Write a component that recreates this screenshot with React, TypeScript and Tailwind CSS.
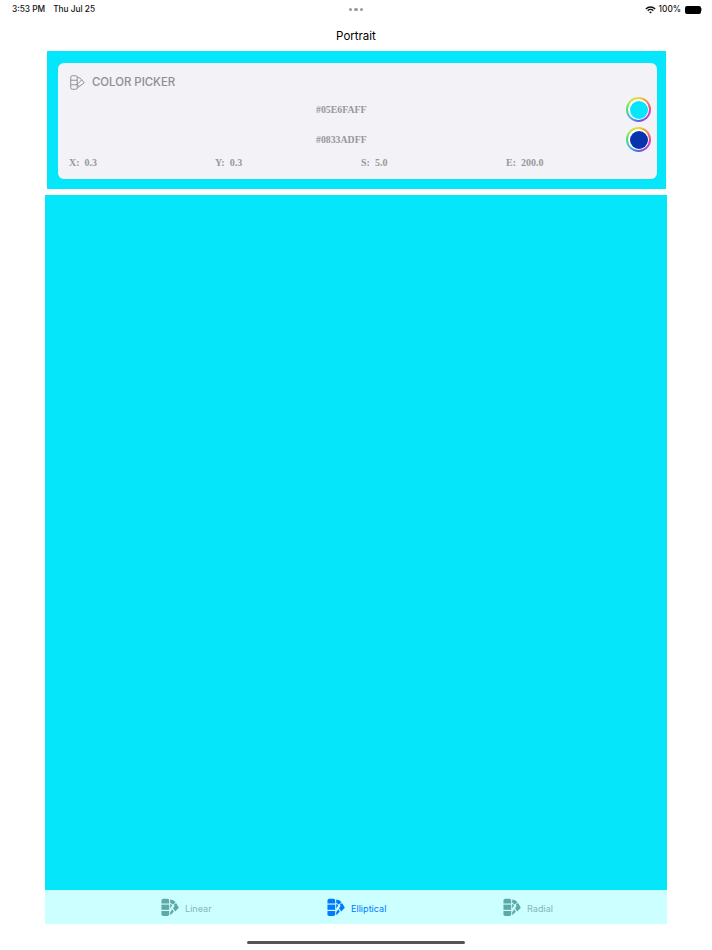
import { useState } from "react";

function Palette({ filled, className }: { filled?: boolean; className?: string }) {
  if (filled) {
    return (
      <svg viewBox="0 0 20 20" className={className} fill="currentColor">
        <path d="M0.5 2.4a2 2 0 0 1 2-2h4.6a2 2 0 0 1 2 2v3.2H0.5z" />
        <path d="M0.5 6.8h8.6v5.8H0.5z" />
        <path d="M0.5 13.8h8.6v3.6a2 2 0 0 1-2 2H2.5a2 2 0 0 1-2-2z" />
        <path d="M10.2 1.2q3.8.4 6 3l-3 2.6-3-2z" />
        <path d="M10.2 5.8l2.4 1.8-2.4 3.6z" />
        <path d="M14.4 6.2l2.6-1 2.8 5.2-4 4-2.4-3.6 1.6-2.4z" />
        <path d="M12.6 12l1.6 2.6-3.6 3.6-.4-.3v-2.6z" />
      </svg>
    );
  }
  return (
    <svg viewBox="0 0 20 20" className={className} fill="none" stroke="currentColor" strokeWidth="1.3" strokeLinejoin="round">
      <rect x="1" y="1" width="8.6" height="18" rx="2" />
      <path d="M1 7h8.6M1 13h8.6" />
      <path d="M9.6 3q4 .2 6 3.4l3.4 4-9.4 7" />
      <path d="M9.6 12.6l6-6.2M12.4 15.4l-2.8-2.8" />
    </svg>
  );
}

function Swatch({ color }: { color: string }) {
  return (
    <div className="w-[25px] h-[25px] rounded-full p-[2px] bg-[conic-gradient(#f0d83a,#f0903c,#e8489a,#a63fe4,#5a60e8,#3fb6f0,#4fdc7a,#b8e64a,#f0d83a)]">
      <div className="w-full h-full rounded-full bg-white p-[1.5px]">
        <div className={`w-full h-full rounded-full ${color}`} />
      </div>
    </div>
  );
}

function ColorRow({ hex, color }: { hex: string; color: string }) {
  return (
    <div className="flex items-center h-[25px]">
      <div className="flex-1 pl-[247px] pt-[2px] text-[9.8px] font-bold font-['Liberation_Serif',serif] text-[#98989d]">{hex}</div>
      <Swatch color={color} />
    </div>
  );
}

function Param({ name, value }: { name: string; value: string }) {
  return (
    <div className="flex gap-[5px]">
      <span>{name}</span>
      <span>{value}</span>
    </div>
  );
}

export default function App() {
  const [tab, setTab] = useState("Elliptical");
  const tabs = [
    { name: "Linear", width: "w-[185px]", pad: "pl-[116px]" },
    { name: "Elliptical", width: "w-[176px]", pad: "pl-[97px]" },
    { name: "Radial", width: "flex-1", pad: "pl-[97px]" },
  ];

  return (
    <div className="w-[712px] h-[950px] flex flex-col bg-white font-['Inter',sans-serif] overflow-hidden">
      <div className="h-[18px] pt-[1px] flex items-center pl-[12px] pr-[10px] text-[8.3px] font-medium text-[#111]">
        <div className="flex-1 flex gap-[8px]">
          <span>3:53 PM</span>
          <span>Thu Jul 25</span>
        </div>
        <div className="flex gap-[2px] -ml-[2px]">
          <div className="w-[3.5px] h-[3.5px] rounded-full bg-[#9a9a9a]" />
          <div className="w-[3.5px] h-[3.5px] rounded-full bg-[#9a9a9a]" />
          <div className="w-[3.5px] h-[3.5px] rounded-full bg-[#9a9a9a]" />
        </div>
        <div className="flex-1 flex items-center justify-end gap-[3px]">
          <svg viewBox="0 0 16 12" className="w-[11px] h-[8px]" fill="none" stroke="#111" strokeWidth="2">
            <path d="M1 4.4a10 10 0 0 1 14 0" />
            <path d="M3.8 7a6 6 0 0 1 8.4 0" />
            <path d="M8 11.4L6 9.2a3 3 0 0 1 4 0z" fill="#111" stroke="none" />
          </svg>
          <span>100%</span>
          <div className="flex items-center ml-[1px]">
            <div className="w-[16px] h-[8px] rounded-[2px] bg-black" />
            <div className="w-[1px] h-[3px] bg-[#999]" />
          </div>
        </div>
      </div>

      <div className="h-[33px] pt-[4px] flex items-center justify-center text-[11.5px] text-black">Portrait</div>

      <div className="ml-[47px] mr-[46px] h-[138px] bg-[#05E6FA] pt-[12px] pl-[11px] pr-[9px]">
        <div className="h-[116px] rounded-[6px] bg-[#f2f2f7] pl-[11px] pr-[6px] flex flex-col">
          <div className="h-[35px] flex items-center gap-[7px] text-[#8e8e93] pl-[1px] pt-[4px]">
            <Palette className="w-[15px] h-[15px]" />
            <span className="text-[11.4px] font-medium pt-[1px]">COLOR PICKER</span>
          </div>
          <div className="-mt-[1px]">
            <ColorRow hex="#05E6FAFF" color="bg-[#05E6FA]" />
          </div>
          <div className="h-[5px]" />
          <ColorRow hex="#0833ADFF" color="bg-[#0833AD]" />
          <div className="grid grid-cols-[146px_146px_145px_1fr] mt-[3px] text-[10px] font-bold font-['Liberation_Serif',serif] text-[#98989d]">
            <Param name="X:" value="0.3" />
            <Param name="Y:" value="0.3" />
            <Param name="S:" value="5.0" />
            <Param name="E:" value="200.0" />
          </div>
        </div>
      </div>

      <div className="mt-[6px] mx-[45px] flex-1 bg-[#05E6FA]" />

      <div className="mx-[45px] h-[34px] bg-[#ccffff] flex">
        {tabs.map((t) => (
          <button
            key={t.name}
            onClick={() => setTab(t.name)}
            className={`${t.width} ${t.pad} flex items-center gap-[6px] pt-[1px] text-[9.1px] ${
              tab === t.name ? "text-[#007aff]" : "text-[#5fa8a8]"
            }`}
          >
            <Palette filled className="w-[18px] h-[19px] shrink-0" />
            <span className={`pt-[3px] ${tab === t.name ? "" : "text-[#7fb8bc]"}`}>{t.name}</span>
          </button>
        ))}
      </div>

      <div className="h-[26px] flex justify-center pt-[16.5px]">
        <div className="w-[218px] h-[3.5px] rounded-full bg-[#555]" />
      </div>
    </div>
  );
}
